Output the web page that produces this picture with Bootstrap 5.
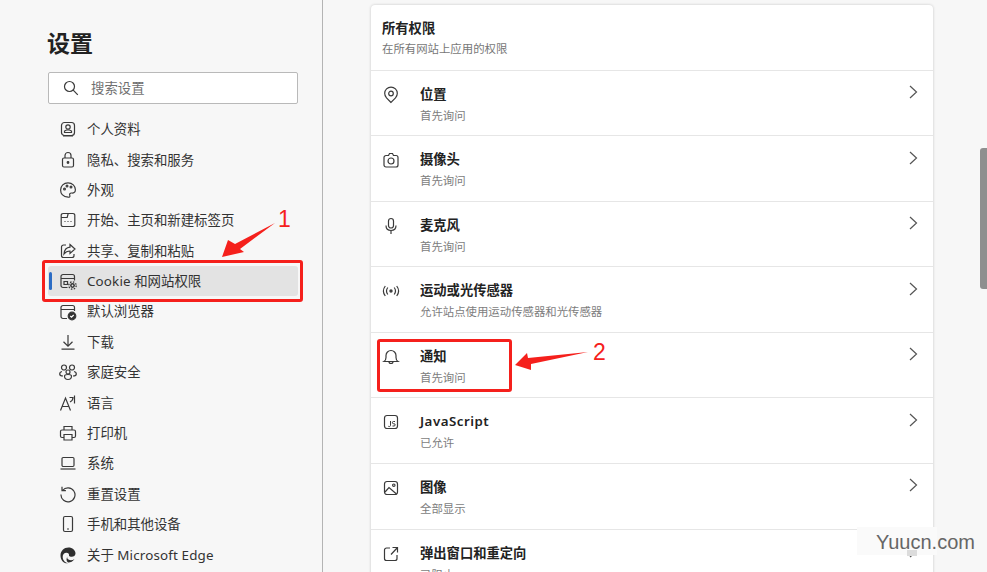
<!DOCTYPE html>
<html lang="zh-CN">
<head>
<meta charset="utf-8">
<title>设置</title>
<link href="https://cdn.jsdelivr.net/npm/bootstrap@5.3.0/dist/css/bootstrap.min.css" rel="stylesheet">
<style>
html,body{height:572px;overflow:hidden}
body{background:#f7f7f7;color:#262626;font-family:"Noto Sans","Noto Sans CJK SC",sans-serif;position:relative}
svg.ico{width:18px;height:18px;fill:none;stroke:#3a3a3a;stroke-width:1.2;flex:none}
.side{width:323px;height:572px;border-right:1px solid #b4b4b4;padding:0 24px 0 48px;flex:none}
.side-title{font-size:23px;font-weight:700;line-height:30px;margin:28px 0 14px -1px;color:#222}
.searchbox{width:250px;height:32px;background:#fff;border:1px solid #b9b9b9;border-radius:2px;padding-left:14px;gap:12px;font-size:13.4px;color:#6f6f6f}
.searchbox svg{width:16px;height:16px}
.navlist{margin-top:10px}
.navitem{height:30.4px;font-size:13.4px;color:#333;gap:10px;padding-left:11px;width:250px;border-radius:3px;position:relative}
.navitem.on{background:#e3e3e3}
.navitem.on::before{content:"";position:absolute;left:1px;top:6px;width:3px;height:18px;background:#2b6cc4;border-radius:2px}
.latin{letter-spacing:.15px}
.pane{padding:5px 0 0 48px}
.permcard{width:562px;border:0;border-radius:4px;box-shadow:0 0 3px rgba(0,0,0,.2)}
.permhead{height:64.7px;padding:14px 11px 0}
.permhead .t1{font-size:13.3px;font-weight:600;line-height:18px;color:#222}
.permhead .t2{font-size:11.4px;line-height:18px;margin-top:3px;color:#777}
.permcard .list-group .permrow.permrow{height:65.55px;border-width:1px 0 0 0;border-style:solid;border-color:#e6e6e6;padding:11px 15px 0 11px;gap:20px;border-radius:0}
.permrow svg.ico{margin-top:4px}
.permrow .rowtxt{flex:1;padding-top:3px}
.rowtitle{font-size:13.3px;font-weight:600;line-height:18px;color:#222}
.rowtitle.jsname{letter-spacing:.5px}
.rowsub{font-size:11.4px;line-height:17px;margin-top:4px;color:#7d7d7d}
.permrow svg.chev{width:10px;height:14px;margin-top:3.500px;stroke:#555;stroke-width:1.2}
.redbox{position:absolute;border:3px solid #f5201c;border-radius:3px}
.rb1{left:42px;top:260px;width:261px;height:42px}
.rb2{left:377px;top:339px;width:135px;height:53px}
.arrows{position:absolute;left:0;top:0;width:987px;height:572px}
.tag{position:absolute;color:#f5201c;font-family:"Liberation Sans",sans-serif;font-size:23px;line-height:24px}
.tag1{left:278px;top:207px}
.tag2{left:593px;top:340px}
.thumb{position:absolute;left:980px;top:148px;width:7px;height:141px;background:#8f8f8f;border-radius:3px 0 0 3px}
.wm{position:absolute;left:857px;top:527px;width:80px;height:28px;background:#fafafa}
.wmspot{position:absolute;left:907px;top:550px;width:10px;height:6px;background:#dcdcdc}
.wmtxt{position:absolute;left:876px;top:529px;font-family:"Liberation Sans",sans-serif;font-size:20px;line-height:26px;color:#666}
</style>
</head>
<body>
<div class="d-flex">
  <aside class="side">
    <div class="side-title">设置</div>
    <div class="searchbox d-flex align-items-center">
      <svg class="ico" viewBox="0 0 16 16"><circle cx="6.500" cy="6.500" r="5"/><path d="M10.200 10.200l4.600 4.600"/></svg>
      <span>搜索设置</span>
    </div>
    <nav class="navlist">
      <div class="navitem d-flex align-items-center"><svg class="ico" viewBox="0 0 18 18"><rect x="2.500" y="2.500" width="13" height="13" rx="3"/><circle cx="9" cy="7" r="2.200"/><path d="M5.500 12.500h7v-1.500l-2-1h-3l-2 1zM4 15.800h10"/></svg><span>个人资料</span></div>
      <div class="navitem d-flex align-items-center"><svg class="ico" viewBox="0 0 18 18"><rect x="3.500" y="7" width="11" height="9" rx="1.500"/><path d="M6 7V4.500a3 3 0 0 1 6 0V7"/><circle cx="9" cy="11.500" r=".8" fill="#3a3a3a"/></svg><span>隐私、搜索和服务</span></div>
      <div class="navitem d-flex align-items-center"><svg class="ico" viewBox="0 0 18 18"><path d="M9 1.800c4.300 0 7.400 3.200 7.400 7 0 3-2.200 3.400-3.600 3.200-1.800-.2-2.600 1-2 2.400.5 1.400-.4 2-1.600 1.800C4.300 15.700 1.600 12.800 1.600 9 1.600 5 4.800 1.800 9 1.800z"/><circle cx="5.500" cy="8" r=".9"/><circle cx="8" cy="5" r=".9"/><circle cx="12" cy="6" r=".9"/></svg><span>外观</span></div>
      <div class="navitem d-flex align-items-center"><svg class="ico" viewBox="0 0 18 18"><path d="M4 2.500h10a1.800 1.800 0 0 1 1.800 1.800v9.400a1.800 1.800 0 0 1-1.800 1.800H4a1.800 1.800 0 0 1-1.800-1.800V4.300A1.800 1.800 0 0 1 4 2.500zM2.200 6.500h6l1-4"/><path d="M5.500 10.500h1M8.500 10.500h1M11.500 10.500h1"/></svg><span>开始、主页和新建标签页</span></div>
      <div class="navitem d-flex align-items-center"><svg class="ico" viewBox="0 0 18 18"><path d="M7 3H4.500a2 2 0 0 0-2 2v8.500a2 2 0 0 0 2 2H13a2 2 0 0 0 2-2V12"/><path d="M11 2.500l5 4.500-5 4.500V9c-3 0-4.500 1-6 3 .3-3.500 2.500-6.500 6-6.800z"/></svg><span>共享、复制和粘贴</span></div>
      <div class="navitem on d-flex align-items-center"><svg class="ico" viewBox="0 0 18 18"><path d="M8.500 15.500H4a2 2 0 0 1-2-2v-9a2 2 0 0 1 2-2h9.500a2 2 0 0 1 2 2V8.500M2 6.500h13.500M5 9.500h3.500v3H5z"/><circle cx="13.500" cy="13.500" r="3.700" fill="none" stroke="#333" stroke-width="1.300" stroke-dasharray="1.500 1.400"/><circle cx="13.500" cy="13.500" r="2.400" fill="#333" stroke="none"/><circle cx="13.500" cy="13.500" r=".9" fill="#e3e3e3" stroke="none"/></svg><span><span class="latin">Cookie</span> 和网站权限</span></div>
      <div class="navitem d-flex align-items-center"><svg class="ico" viewBox="0 0 18 18"><path d="M8 15.500H4a2 2 0 0 1-2-2v-9a2 2 0 0 1 2-2h9.500a2 2 0 0 1 2 2V8M2 6.500h13.500"/><circle cx="13" cy="13" r="3.800" fill="#333"/><path d="M11.300 13l1.200 1.200 2.200-2.200" stroke="#fff"/></svg><span>默认浏览器</span></div>
      <div class="navitem d-flex align-items-center"><svg class="ico" viewBox="0 0 18 18"><path d="M9 2v11M4.500 8.800L9 13.200l4.500-4.400M2.500 16.200h13"/></svg><span>下载</span></div>
      <div class="navitem d-flex align-items-center"><svg class="ico" viewBox="0 0 18 18"><circle cx="5" cy="4.500" r="2.500"/><circle cx="13" cy="4.500" r="2.500"/><circle cx="9" cy="9" r="2"/><path d="M3 8.500c-1.500.3-2.300 1.200-2.300 2.500S2 13 4 13M15 8.500c1.500.3 2.300 1.200 2.300 2.500S16 13 14 13M5.500 13c0-1 1.200-1.500 3.500-1.500s3.500.5 3.500 1.500c0 2-1.500 3.500-3.500 3.500S5.500 15 5.500 13z"/></svg><span>家庭安全</span></div>
      <div class="navitem d-flex align-items-center"><svg class="ico" viewBox="0 0 18 18"><path d="M1.500 16.500L6.500 4l5 12.500M3.300 12.500h6.500M10.500 3.500h3.500c0 2-1 3.500-3 4.500M15.500 1.500v8"/></svg><span>语言</span></div>
      <div class="navitem d-flex align-items-center"><svg class="ico" viewBox="0 0 18 18"><path d="M5 6V2.500h8V6M5 13.500H3a1.500 1.500 0 0 1-1.500-1.500V7.500A1.500 1.500 0 0 1 3 6h12a1.500 1.500 0 0 1 1.500 1.500V12a1.500 1.500 0 0 1-1.500 1.500h-2"/><path d="M5 10.500h8v5.500H5z"/></svg><span>打印机</span></div>
      <div class="navitem d-flex align-items-center"><svg class="ico" viewBox="0 0 18 18"><rect x="3" y="3.500" width="12" height="9" rx="1.200"/><path d="M1.500 15h15"/></svg><span>系统</span></div>
      <div class="navitem d-flex align-items-center"><svg class="ico" viewBox="0 0 18 18"><path d="M3.500 5.500A7 7 0 1 1 2 9.500M3 1.800v3.900h3.900"/></svg><span>重置设置</span></div>
      <div class="navitem d-flex align-items-center"><svg class="ico" viewBox="0 0 18 18"><rect x="4.500" y="1.500" width="9" height="15" rx="1.500"/><path d="M8 14h2"/></svg><span>手机和其他设备</span></div>
      <div class="navitem d-flex align-items-center"><svg class="ico" viewBox="0 0 18 18"><path d="M1.500 9.500C1.500 5 5 1.500 9.500 1.500c3.800 0 7 2.700 7 6 0 2-1.800 3.300-3.800 3.300-1.300 0-2.300-.4-2.700-1 .4-1.800-.8-3-2.500-3-2.400 0-4 2-3.800 4.500.2 3 2.500 5.500 5.500 6-4.800.6-7.700-3.500-7.700-7.800z" fill="#2f2f2f" stroke="none"/><path d="M9 16.500c2 .2 5-.8 6.500-3.500-2 1.500-4.500 1.600-6 .6-1.200-.8-1.500-2-1.200-3.200C7.300 12.500 7 15 9 16.500z" fill="#2f2f2f" stroke="none"/></svg><span>关于 <span class="latin">Microsoft Edge</span></span></div>
    </nav>
  </aside>
  <main class="pane">
    <section class="card permcard">
      <div class="permhead">
        <div class="t1">所有权限</div>
        <div class="t2">在所有网站上应用的权限</div>
      </div>
      <div class="list-group list-group-flush">
        <div class="list-group-item permrow d-flex bg-white"><svg class="ico" viewBox="0 0 18 18"><path d="M9 16.500L4.500 11.800A6.300 6.300 0 1 1 13.500 11.800z"/><circle cx="9" cy="7.500" r="2.300"/></svg><div class="rowtxt"><div class="rowtitle">位置</div><div class="rowsub">首先询问</div></div><svg class="ico chev" viewBox="0 0 10 14"><path d="M2 1l6.500 6L2 13"/></svg></div>
        <div class="list-group-item permrow d-flex bg-white"><svg class="ico" viewBox="0 0 18 18"><path d="M6.500 4.500L7.500 2.500h3l1 2H14a2 2 0 0 1 2 2v7.500a2 2 0 0 1-2 2H4a2 2 0 0 1-2-2V6.500a2 2 0 0 1 2-2z"/><circle cx="9" cy="10" r="3"/></svg><div class="rowtxt"><div class="rowtitle">摄像头</div><div class="rowsub">首先询问</div></div><svg class="ico chev" viewBox="0 0 10 14"><path d="M2 1l6.500 6L2 13"/></svg></div>
        <div class="list-group-item permrow d-flex bg-white"><svg class="ico" viewBox="0 0 18 18"><rect x="6.500" y="1.500" width="5" height="9.500" rx="2.500"/><path d="M4 8.500c0 3 2 5 5 5s5-2 5-5M9 13.500v3.500"/></svg><div class="rowtxt"><div class="rowtitle">麦克风</div><div class="rowsub">首先询问</div></div><svg class="ico chev" viewBox="0 0 10 14"><path d="M2 1l6.500 6L2 13"/></svg></div>
        <div class="list-group-item permrow d-flex bg-white"><svg class="ico" viewBox="0 0 18 18"><circle cx="9" cy="9" r="1.100" fill="#3a3a3a"/><path d="M5.800 5.500c-1.500 2-1.500 5 0 7M12.200 5.500c1.500 2 1.500 5 0 7M3.300 4c-2.300 3-2.300 7 0 10M14.700 4c2.300 3 2.300 7 0 10"/></svg><div class="rowtxt"><div class="rowtitle">运动或光传感器</div><div class="rowsub">允许站点使用运动传感器和光传感器</div></div><svg class="ico chev" viewBox="0 0 10 14"><path d="M2 1l6.500 6L2 13"/></svg></div>
        <div class="list-group-item permrow d-flex bg-white"><svg class="ico" viewBox="0 0 18 18"><path d="M2 13.500c1.500-1 2-2 2-4V7.500a5 5 0 0 1 10 0v2c0 2 .5 3 2 4zM7 13.500a2 2 0 0 0 4 0"/></svg><div class="rowtxt"><div class="rowtitle">通知</div><div class="rowsub">首先询问</div></div><svg class="ico chev" viewBox="0 0 10 14"><path d="M2 1l6.500 6L2 13"/></svg></div>
        <div class="list-group-item permrow d-flex bg-white"><svg class="ico" viewBox="0 0 18 18"><rect x="2.500" y="2.500" width="13" height="13" rx="2.500"/><path d="M8.500 8v4.500a1.300 1.300 0 0 1-2.300.6M13 8.500h-1.500a1 1 0 0 0 0 2.200h.5a1 1 0 0 1 0 2.300h-1.500" stroke-width="1"/></svg><div class="rowtxt"><div class="rowtitle jsname">JavaScript</div><div class="rowsub">已允许</div></div><svg class="ico chev" viewBox="0 0 10 14"><path d="M2 1l6.500 6L2 13"/></svg></div>
        <div class="list-group-item permrow d-flex bg-white"><svg class="ico" viewBox="0 0 18 18"><rect x="2.500" y="2.500" width="13" height="13" rx="2.500"/><path d="M3 13l4-4.500 7.500 6.500"/><circle cx="11.800" cy="6.200" r="1.200"/></svg><div class="rowtxt"><div class="rowtitle">图像</div><div class="rowsub">全部显示</div></div><svg class="ico chev" viewBox="0 0 10 14"><path d="M2 1l6.500 6L2 13"/></svg></div>
        <div class="list-group-item permrow d-flex bg-white"><svg class="ico" viewBox="0 0 18 18"><path d="M8 3H4.500a2 2 0 0 0-2 2v8.500a2 2 0 0 0 2 2H13a2 2 0 0 0 2-2V10M9 9.500l6.500-7M10.500 2.500h5v5"/></svg><div class="rowtxt"><div class="rowtitle">弹出窗口和重定向</div><div class="rowsub">已阻止</div></div><svg class="ico chev" viewBox="0 0 10 14"><path d="M2 1l6.500 6L2 13"/></svg></div>
      </div>
    </section>
  </main>
</div>
<div class="thumb"></div>
<div class="wm"></div>
<div class="wmspot"></div>
<div class="wmtxt">Yuucn.com</div>
<div class="redbox rb1"></div>
<div class="redbox rb2"></div>
<svg class="arrows" viewBox="0 0 987 572"><polygon fill="#f5201c" points="222,257 228,240 235,244 275,223 240,249 244,252"/><polygon fill="#f5201c" points="515,365 527,353 528,358 588,352 531,364 531,370"/></svg>
<div class="tag tag1">1</div>
<div class="tag tag2">2</div>
</body>
</html>
